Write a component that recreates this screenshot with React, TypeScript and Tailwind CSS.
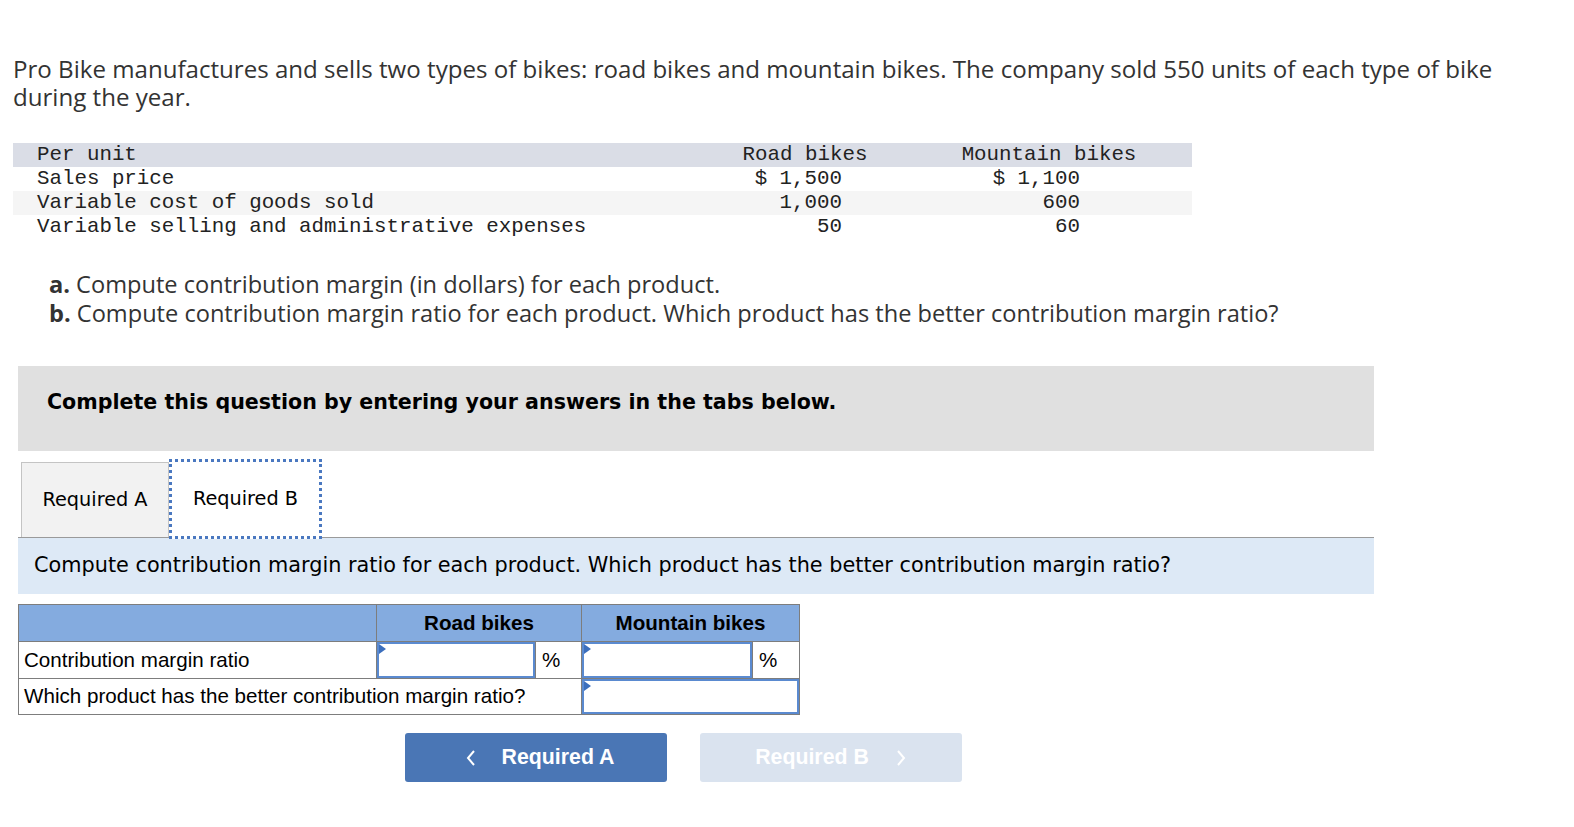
const sans = "font-['Open_Sans','Noto_Sans',sans-serif]";
const mono = "font-['Liberation_Mono','Courier_New',monospace]";
const verdana = "font-['DejaVu_Sans','Verdana',sans-serif]";
const arial = "font-['Liberation_Sans','Arial',sans-serif]";

const dataRows = [
  { label: "Per unit", road: "Road bikes", mtn: "Mountain bikes", head: true },
  { label: "Sales price", road: "$ 1,500", mtn: "$ 1,100" },
  { label: "Variable cost of goods sold", road: "1,000", mtn: "600", shade: true },
  { label: "Variable selling and administrative expenses", road: "50", mtn: "60" },
];

const AnswerInput = () => (
  <div className="relative h-full w-full border-2 border-[#5a8ad0] bg-white">
    <div className="absolute left-0 top-0 h-0 w-0 border-y-[5px] border-l-[7px] border-y-transparent border-l-[#3c6fbd]" />
  </div>
);

const Chevron = ({ left }: { left?: boolean }) => (
  <svg width="12" height="18" viewBox="0 0 12 18" fill="none">
    <polyline
      points={left ? "9,2 3,9 9,16" : "3,2 9,9 3,16"}
      stroke="currentColor"
      strokeWidth="2"
    />
  </svg>
);

export default function App() {
  return (
    <div className="min-h-screen bg-white px-[13px] pt-[55px] text-[#222]">
      {/* intro */}
      <p className={`${sans} w-[1500px] text-[24.1px] leading-[28px] text-[#333]`}>
        Pro Bike manufactures and sells two types of bikes: road bikes and mountain bikes. The company sold 550 units of
        each type of bike during the year.
      </p>

      {/* given data */}
      <div className={`${mono} mt-[32px] w-[1179px] text-[20.8px] leading-[24px] text-[#222]`}>
        {dataRows.map((r) => (
          <div
            key={r.label}
            className={`grid h-[24px] grid-cols-[717px_150px_44px_250px_18px] items-center ${
              r.head ? "bg-[#dadde6]" : r.shade ? "bg-[#f5f5f5]" : ""
            }`}
          >
            <div className="whitespace-pre pl-[24px]">{r.label}</div>
            <div className={`whitespace-pre ${r.head ? "text-center" : "pr-[38px] text-right"}`}>{r.road}</div>
            <div />
            <div className={`whitespace-pre ${r.head ? "text-center" : "pr-[94px] text-right"}`}>{r.mtn}</div>
            <div />
          </div>
        ))}
      </div>

      {/* questions */}
      <div className={`${sans} mt-[31px] pl-[36px] text-[23.6px] leading-[29px] text-[#333]`}>
        <p>
          <span className="font-bold">a.</span> Compute contribution margin (in dollars) for each product.
        </p>
        <p>
          <span className="font-bold">b.</span> Compute contribution margin ratio for each product. Which product has the
          better contribution margin ratio?
        </p>
      </div>

      <div className="ml-[5px] w-[1356px]">
        {/* instruction box */}
        <div className={`${verdana} mt-[38px] h-[85px] bg-[#e0e0e0] pl-[29px] pt-[23px]`}>
          <p className="text-[20.6px] font-bold leading-[26px] text-black">
            Complete this question by entering your answers in the tabs below.
          </p>
        </div>

        {/* tabs */}
        <div className={`${verdana} mt-[12px] flex h-[75px] items-end border-b border-[#9a9a9a] pl-[3px] text-[19.3px] text-black`}>
          <div className="flex h-[75px] w-[148px] items-center justify-center border-x border-t border-[#c4c4c4] bg-[#f2f2f2]">
            Required A
          </div>
          <div className="relative -mb-[2px] flex h-[80px] w-[153px] items-center justify-center border-[3px] border-dotted border-[#4a78c0] bg-white">
            Required B
          </div>
        </div>

        {/* prompt strip */}
        <div className={`${verdana} flex h-[56px] items-center bg-[#dde9f6] pl-[16px] text-[20.8px] text-black`}>
          Compute contribution margin ratio for each product. Which product has the better contribution margin ratio?
        </div>

        {/* answer table */}
        <table className={`${arial} mt-[10px] border-collapse text-[20.6px] text-black`}>
          <colgroup>
            <col className="w-[358px]" />
            <col className="w-[159px]" />
            <col className="w-[46px]" />
            <col className="w-[171px]" />
            <col className="w-[47px]" />
          </colgroup>
          <tbody>
            <tr className="h-[37px] bg-[#84abdf]">
              <td className="border border-[#7d7d7d]" />
              <td colSpan={2} className="border border-[#7d7d7d] text-center font-bold">
                Road bikes
              </td>
              <td colSpan={2} className="border border-[#7d7d7d] text-center font-bold">
                Mountain bikes
              </td>
            </tr>
            <tr className="h-[37px]">
              <td className="border border-[#7d7d7d] pl-[5px]">Contribution margin ratio</td>
              <td className="h-[37px] border border-[#7d7d7d] p-0">
                <AnswerInput />
              </td>
              <td className="border border-[#7d7d7d] pl-[6px]">%</td>
              <td className="h-[37px] border border-[#7d7d7d] p-0">
                <AnswerInput />
              </td>
              <td className="border border-[#7d7d7d] pl-[6px]">%</td>
            </tr>
            <tr className="h-[36px]">
              <td colSpan={3} className="border border-[#7d7d7d] pl-[5px]">
                Which product has the better contribution margin ratio?
              </td>
              <td colSpan={2} className="h-[36px] border border-[#7d7d7d] p-0">
                <AnswerInput />
              </td>
            </tr>
          </tbody>
        </table>

        {/* nav buttons */}
        <div className={`${arial} mt-[18px] flex gap-[33px] pl-[387px] text-[21.3px] font-bold text-white`}>
          <button className="flex h-[49px] w-[262px] items-center justify-center gap-[25px] rounded-[3px] bg-[#4a76b5] pl-[7px]">
            <Chevron left />
            <span>Required A</span>
          </button>
          <button className="flex h-[49px] w-[262px] items-center justify-center gap-[26px] rounded-[3px] bg-[#dae3ef]">
            <span>Required B</span>
            <Chevron />
          </button>
        </div>
      </div>
    </div>
  );
}
